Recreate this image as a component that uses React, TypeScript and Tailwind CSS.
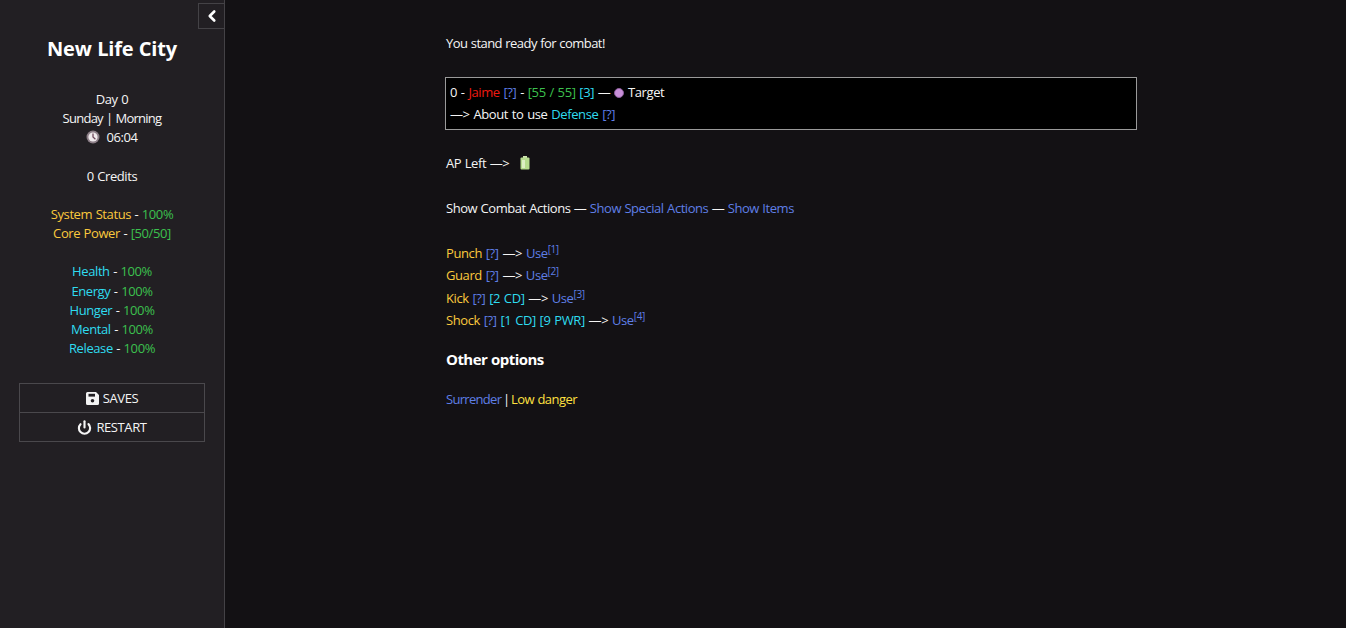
import { Power, ChevronLeft } from 'lucide-react'

const LINK = 'text-[#5f7fe6]'
const GOLD = 'text-[#fbc93d]'
const CYAN = 'text-[#2fdcf0]'
const GREEN = 'text-[#3cc04e]'

const Q = () => <span className={LINK}>[?]</span>

function ClockIcon() {
  return (
    <svg width="14" height="14" viewBox="0 0 14 14" className="inline-block align-[-2px] mr-[6px]">
      <circle cx="7" cy="7" r="6.5" fill="#8d7f88" />
      <circle cx="7" cy="7" r="4.6" fill="#efe9ec" />
      <path d="M7 3.6V7l2.4 2.2" stroke="#6e4a5c" strokeWidth="1.3" fill="none" />
    </svg>
  )
}

function BatteryIcon() {
  return (
    <svg width="10" height="14" viewBox="0 0 10 14" className="inline-block align-[-2px] ml-[4px]">
      <rect x="3" y="0" width="4" height="2" fill="#cfe3b0" />
      <rect x="0.5" y="1.5" width="9" height="12" rx="1" fill="#b6dc8e" />
      <rect x="2" y="4" width="3" height="8" fill="#dcefc4" />
    </svg>
  )
}

function SaveIcon() {
  return (
    <svg width="13" height="13" viewBox="0 0 13 13">
      <path d="M1.5 0H10l3 3v8.5a1.5 1.5 0 0 1-1.5 1.5h-10A1.5 1.5 0 0 1 0 11.500v-10A1.500 1.500 0 0 1 1.500 0z" fill="#f3f3f3" />
      <rect x="2.500" y="1.800" width="6.500" height="2.800" fill="#221f23" />
      <circle cx="6.500" cy="8.700" r="1.800" fill="#221f23" />
    </svg>
  )
}

function Stat({ label, value, color, h }: { label: string; value: string; color: string; h?: string }) {
  return (
    <p className={h}>
      <span className={color}>{label}</span> - <span className={GREEN}>{value}</span>
    </p>
  )
}

function Move({ name, tags, n, h }: { name: string; tags?: string[]; n: number; h: string }) {
  return (
    <p className={`${h} [word-spacing:0.8px]`}>
      <span className={GOLD}>{name}</span> <Q />{' '}
      {tags?.map((t) => (
        <span key={t} className={CYAN}>
          {t}{' '}
        </span>
      ))}
      —&gt; <span className={LINK}>Use</span>
      <sup className={`${LINK} text-[10px] leading-none -top-[5px]`}>[{n}]</sup>
    </p>
  )
}

export default function App() {
  return (
    <div className="flex h-[628px] overflow-hidden bg-[#131114] text-[#f5f5f5] text-[13px] leading-[19px] font-['Open_Sans','Noto_Sans',sans-serif] tracking-[-0.4px] [word-spacing:0.5px]">
      <aside className="relative w-[225px] shrink-0 bg-[#221f23] border-r border-[#444246] text-center">
        <button className="absolute right-0 top-[3px] w-[26px] h-[26px] flex items-center justify-center border border-[#444246] border-r-0">
          <ChevronLeft size={18} strokeWidth={3.5} className="text-white" />
        </button>
        <h1 className="mt-[35px] text-[20px] leading-[28px] font-bold text-white tracking-[-0.2px]">New Life City</h1>
        <div className="mt-[27px]">
          <p>Day 0</p>
          <p className="tracking-[-0.75px]">Sunday | Morning</p>
          <p>
            <ClockIcon />
            06:04
          </p>
        </div>
        <p className="mt-[20px]">0 Credits</p>
        <div className="mt-[19px]">
          <Stat label="System Status" value="100%" color={GOLD} />
          <p>
            <span className={GOLD}>Core Power</span> - <span className={GREEN}>[50/50]</span>
          </p>
        </div>
        <div className="mt-[19px]">
          <Stat label="Health" value="100%" color={CYAN} h="h-[20px]" />
          <Stat label="Energy" value="100%" color={CYAN} />
          <Stat label="Hunger" value="100%" color={CYAN} />
          <Stat label="Mental" value="100%" color={CYAN} />
          <Stat label="Release" value="100%" color={CYAN} />
        </div>
        <div className="mt-[25px] mx-[19px] border border-[#4a484c]">
          <div className="h-[29px] pt-px flex items-center justify-center gap-[4px] border-b border-[#4a484c]">
            <SaveIcon />
            SAVES
          </div>
          <div className="h-[28px] pt-px flex items-center justify-center gap-[4px]">
            <Power size={15} strokeWidth={3.4} />
            RESTART
          </div>
        </div>
      </aside>
      <main className="flex-1 pl-[221px] pt-[34px]">
        <p className="tracking-[-0.55px]">You stand ready for combat!</p>
        <div className="mt-[24px] -ml-px w-[692px] h-[53px] border border-[#9a9a9a] bg-black px-[4px] pt-[5px]">
          <p className="h-[22px] [word-spacing:0.8px]">
            0 - <span className="text-[#ee1a10]">Jaime</span> <Q /> - <span className={GREEN}>[55 / 55]</span>{' '}
            <span className={CYAN}>[3]</span> —{' '}
            <span className="inline-block w-[10px] h-[10px] rounded-full bg-[#c98fd8] border border-[#8a5c9a] align-[-1px]" />{' '}
            Target
          </p>
          <p className="[word-spacing:0.8px]">
            —&gt; About to use <span className={CYAN}>Defense</span> <Q />
          </p>
        </div>
        <p className="mt-[24px]">
          AP Left —&gt; &nbsp;
          <BatteryIcon />
        </p>
        <p className="mt-[26px] tracking-[-0.45px]">
          Show Combat Actions — <span className={LINK}>Show Special Actions</span> —{' '}
          <span className={LINK}>Show Items</span>
        </p>
        <div className="mt-[26px]">
          <Move name="Punch" n={1} h="h-[22px]" />
          <Move name="Guard" n={2} h="h-[23px]" />
          <Move name="Kick" n={3} tags={['[2 CD]']} h="h-[22px]" />
          <Move name="Shock" n={4} tags={['[1 CD]', '[9 PWR]']} h="h-[22px]" />
        </div>
        <h2 className="mt-[15px] text-[15px] leading-[22px] font-bold text-white tracking-[-0.55px]">Other options</h2>
        <p className="mt-[20px] tracking-[-0.7px] [word-spacing:-1px]">
          <span className={LINK}>Surrender</span> |{' '}
          <span className="text-[#ffe040] tracking-[-0.55px] [word-spacing:0.5px]">Low danger</span>
        </p>
      </main>
    </div>
  )
}
